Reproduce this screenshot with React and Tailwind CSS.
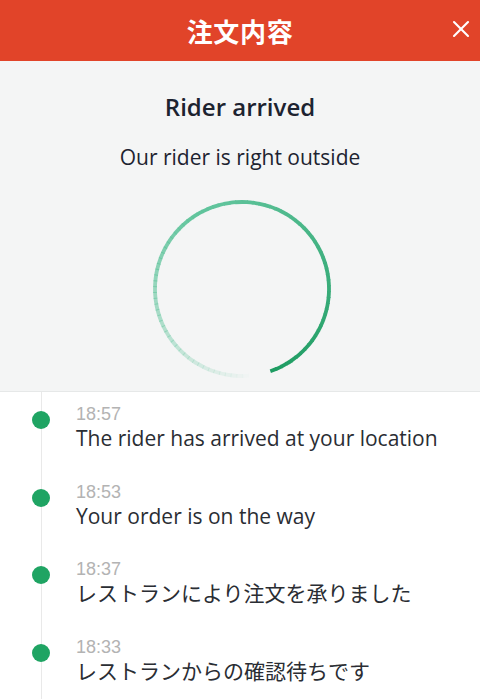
import { X } from 'lucide-react';

const events = [
  { time: '18:57', text: 'The rider has arrived at your location' },
  { time: '18:53', text: 'Your order is on the way' },
  { time: '18:37', text: 'レストランにより注文を承りました' },
  { time: '18:33', text: 'レストランからの確認待ちです' },
];

// spinner ring drawn as small arc pieces fading counter-clockwise
function Spinner() {
  const cx = 90;
  const cy = 90;
  const r = 87;
  const start = 161;
  const span = 345;
  const steps = 90;
  const pt = (deg) => {
    const a = (deg * Math.PI) / 180;
    return [cx + r * Math.sin(a), cy - r * Math.cos(a)];
  };
  const segs = [];
  for (let i = 0; i < steps; i++) {
    const t = i / steps;
    const a1 = start - span * t;
    const a2 = start - span * (t + 1 / steps) - 0.6;
    const [x1, y1] = pt(a1);
    const [x2, y2] = pt(a2);
    // dark green -> light mint -> transparent
    const g0 = [30, 156, 98];
    const g1 = [96, 196, 156];
    const k = Math.min(1, t / 0.5);
    const c = g0.map((v, j) => Math.round(v + (g1[j] - v) * k));
    const op = t < 0.55 ? 1 : Math.max(0, 1 - (t - 0.55) / 0.45);
    segs.push(
      <path
        key={i}
        d={`M${x1} ${y1} A${r} ${r} 0 0 0 ${x2} ${y2}`}
        stroke={`rgb(${c[0]},${c[1]},${c[2]})`}
        strokeOpacity={op}
        strokeWidth="3.8"
        fill="none"
      />
    );
  }
  return (
    <svg width="180" height="180" viewBox="0 0 180 180">
      {segs}
    </svg>
  );
}

export default function App() {
  return (
    <div className="w-[480px] h-[699px] overflow-hidden bg-white font-['Open_Sans','Noto_Sans_CJK_JP',sans-serif]">
      <header className="relative h-[61px] bg-[#e14429] flex items-center justify-center">
        <h1 className="text-white text-[26px] font-bold tracking-wide font-['Noto_Sans_CJK_JP',sans-serif]">注文内容</h1>
        <button className="absolute right-[5px] top-[15px] text-white">
          <X size={28} strokeWidth={1.8} />
        </button>
      </header>

      <section className="h-[331px] bg-[#f4f5f5] border-b border-[#e6e8e8] flex flex-col items-center pt-[30px]">
        <h2 className="text-[24px] font-semibold text-[#1d2330] leading-[32px]">Rider arrived</h2>
        <p className="mt-[20px] text-[21px] text-[#1d2330] leading-[28px]">Our rider is right outside</p>
        <div className="mt-[28px] ml-[3px]">
          <Spinner />
        </div>
      </section>

      <ul className="relative pl-[76px] pt-[11px]">
        <div className="absolute left-[41px] top-0 bottom-[-400px] w-px bg-[#e9e9e9]" />
        {events.map((e) => (
          <li key={e.time} className="relative h-[77.7px]">
            <span className="absolute left-[-44px] top-[8px] w-[18px] h-[18px] rounded-full bg-[#1fa463]" />
            <div className="text-[18px] leading-[22px] text-[#b3b3b3] font-['Liberation_Sans',sans-serif]">{e.time}</div>
            <div className="text-[21px] leading-[26px] text-[#2a2d33] font-['Open_Sans','Noto_Sans_CJK_JP',sans-serif]">{e.text}</div>
          </li>
        ))}
      </ul>
    </div>
  );
}
